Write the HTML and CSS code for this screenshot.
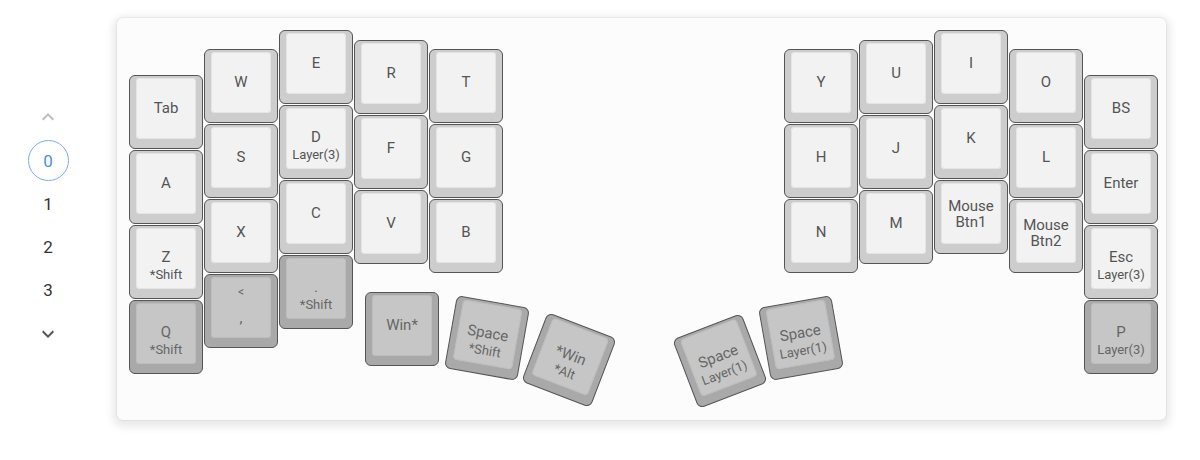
FILE: index.html
```html
<!DOCTYPE html>
<html>
<head>
<meta charset="utf-8">
<link rel="stylesheet" href="styles.css">
</head>
<body>
<div class="page">
  <nav class="layers">
    <svg class="chev up" viewBox="0 0 24 24" width="24" height="24"><path d="M7.4 15.4 12 10.8l4.6 4.6L18 14l-6-6-6 6z"/></svg>
    <div class="layer active">0</div>
    <div class="layer">1</div>
    <div class="layer">2</div>
    <div class="layer">3</div>
    <svg class="chev down" viewBox="0 0 24 24" width="24" height="24"><path d="M16.6 8.6 12 13.2 7.4 8.6 6 10l6 6 6-6z"/></svg>
  </nav>
  <main class="card">
    <div class="board">
      <div class="key" style="--x:12px;--y:57px"><div class="cap"><span class="main">Tab</span></div></div>
      <div class="key" style="--x:12px;--y:132px"><div class="cap"><span class="main">A</span></div></div>
      <div class="key" style="--x:12px;--y:207px"><div class="cap two"><span class="main">Z</span><span class="sub">*Shift</span></div></div>
      <div class="key dark" style="--x:12px;--y:282px"><div class="cap two"><span class="main">Q</span><span class="sub">*Shift</span></div></div>

      <div class="key" style="--x:87px;--y:31px"><div class="cap"><span class="main">W</span></div></div>
      <div class="key" style="--x:87px;--y:106px"><div class="cap"><span class="main">S</span></div></div>
      <div class="key" style="--x:87px;--y:181px"><div class="cap"><span class="main">X</span></div></div>
      <div class="key dark" style="--x:87px;--y:256px"><div class="cap pair"><span class="top">&lt;</span><span class="bottom">,</span></div></div>

      <div class="key" style="--x:162px;--y:12px"><div class="cap"><span class="main">E</span></div></div>
      <div class="key" style="--x:162px;--y:87px"><div class="cap two"><span class="main">D</span><span class="sub">Layer(3)</span></div></div>
      <div class="key" style="--x:162px;--y:162px"><div class="cap"><span class="main">C</span></div></div>
      <div class="key dark" style="--x:162px;--y:237px"><div class="cap two"><span class="main">.</span><span class="sub">*Shift</span></div></div>

      <div class="key" style="--x:237px;--y:22px"><div class="cap"><span class="main">R</span></div></div>
      <div class="key" style="--x:237px;--y:97px"><div class="cap"><span class="main">F</span></div></div>
      <div class="key" style="--x:237px;--y:172px"><div class="cap"><span class="main">V</span></div></div>

      <div class="key" style="--x:312px;--y:31px"><div class="cap"><span class="main">T</span></div></div>
      <div class="key" style="--x:312px;--y:106px"><div class="cap"><span class="main">G</span></div></div>
      <div class="key" style="--x:312px;--y:181px"><div class="cap"><span class="main">B</span></div></div>

      <div class="key dark" style="--x:248px;--y:274px"><div class="cap"><span class="main">Win*</span></div></div>
      <div class="key dark" style="--x:333px;--y:283px;--r:10deg"><div class="cap two"><span class="main">Space</span><span class="sub">*Shift</span></div></div>
      <div class="key dark" style="--x:415px;--y:305px;--r:21deg"><div class="cap two"><span class="main">*Win</span><span class="sub">*Alt</span></div></div>

      <div class="key dark" style="--x:566px;--y:306px;--r:-21deg"><div class="cap two"><span class="main">Space</span><span class="sub">Layer(1)</span></div></div>
      <div class="key dark" style="--x:647px;--y:283px;--r:-10deg"><div class="cap two"><span class="main">Space</span><span class="sub">Layer(1)</span></div></div>

      <div class="key" style="--x:667px;--y:31px"><div class="cap"><span class="main">Y</span></div></div>
      <div class="key" style="--x:667px;--y:106px"><div class="cap"><span class="main">H</span></div></div>
      <div class="key" style="--x:667px;--y:181px"><div class="cap"><span class="main">N</span></div></div>

      <div class="key" style="--x:742px;--y:22px"><div class="cap"><span class="main">U</span></div></div>
      <div class="key" style="--x:742px;--y:97px"><div class="cap"><span class="main">J</span></div></div>
      <div class="key" style="--x:742px;--y:172px"><div class="cap"><span class="main">M</span></div></div>

      <div class="key" style="--x:817px;--y:12px"><div class="cap"><span class="main">I</span></div></div>
      <div class="key" style="--x:817px;--y:87px"><div class="cap"><span class="main">K</span></div></div>
      <div class="key" style="--x:817px;--y:162px"><div class="cap"><span class="main wrap">Mouse Btn1</span></div></div>

      <div class="key" style="--x:892px;--y:31px"><div class="cap"><span class="main">O</span></div></div>
      <div class="key" style="--x:892px;--y:106px"><div class="cap"><span class="main">L</span></div></div>
      <div class="key" style="--x:892px;--y:181px"><div class="cap"><span class="main wrap">Mouse Btn2</span></div></div>

      <div class="key" style="--x:967px;--y:57px"><div class="cap"><span class="main">BS</span></div></div>
      <div class="key" style="--x:967px;--y:132px"><div class="cap"><span class="main">Enter</span></div></div>
      <div class="key" style="--x:967px;--y:207px"><div class="cap two"><span class="main">Esc</span><span class="sub">Layer(3)</span></div></div>
      <div class="key dark" style="--x:967px;--y:282px"><div class="cap two"><span class="main">P</span><span class="sub">Layer(3)</span></div></div>
    </div>
  </main>
</div>
</body>
</html>
```
FILE: styles.css
```css
html, body {
  margin: 0;
  padding: 0;
  background: #ffffff;
}
body {
  font-family: Roboto, "Liberation Sans", Arial, sans-serif;
  width: 1200px;
  height: 460px;
  overflow: hidden;
}
.page {
  display: flex;
  align-items: flex-start;
}
.layers {
  width: 96px;
  flex: none;
  display: flex;
  flex-direction: column;
  align-items: center;
  padding-top: 105px;
}
.chev {
  display: block;
}
.chev.up {
  fill: #bdbdbd;
  margin-bottom: 10px;
}
.chev.down {
  fill: #555555;
  margin-top: 11px;
}
.layer {
  width: 41px;
  height: 41px;
  margin: 1px 0;
  box-sizing: border-box;
  display: flex;
  align-items: center;
  justify-content: center;
  font-size: 17px;
  color: #333333;
  border-radius: 50%;
  border: 1px solid transparent;
}
.layer.active {
  color: #4a90e2;
  border-color: #7aaee8;
}
.card {
  margin-left: 21px;
  margin-top: 18px;
  width: 1049px;
  height: 402px;
  background: #fcfcfc;
  border-radius: 6px;
  box-shadow: 0 0 0 1px rgba(0, 0, 0, 0.04), 0 3px 9px 4px rgba(0, 0, 0, 0.09);
  position: relative;
}
.board {
  position: relative;
  width: 100%;
  height: 100%;
}
.key {
  position: absolute;
  left: var(--x);
  top: var(--y);
  transform: rotate(var(--r, 0deg));
  width: 74px;
  height: 74px;
  box-sizing: border-box;
  border: 1px solid #555555;
  border-radius: 6px;
  background: #cdcdcd;
  padding: 2px 6px 9px 6px;
  display: flex;
}
.key.dark {
  background: #a9a9a9;
}
.cap {
  flex: 1;
  border-radius: 4px;
  background: #f2f2f2;
  box-shadow: inset 0 0 0 1px #e4e4e4;
  display: flex;
  flex-direction: column;
  align-items: center;
  justify-content: center;
  text-align: center;
  color: #555555;
}
.key.dark .cap {
  background: #c6c6c6;
  box-shadow: inset 0 0 0 1px #bdbdbd;
  color: #666666;
}
.cap.two {
  padding-top: 15px;
}
.main {
  font-size: 15px;
  line-height: 17px;
}
.main.wrap {
  width: 56px;
  line-height: 16px;
}
.sub {
  font-size: 13px;
  line-height: 17px;
}
.cap.pair {
  justify-content: flex-start;
  padding-top: 8px;
}
.cap.pair .top {
  font-size: 12px;
  line-height: 14px;
}
.cap.pair .bottom {
  font-size: 15px;
  line-height: 17px;
  margin-top: 11px;
}
```
